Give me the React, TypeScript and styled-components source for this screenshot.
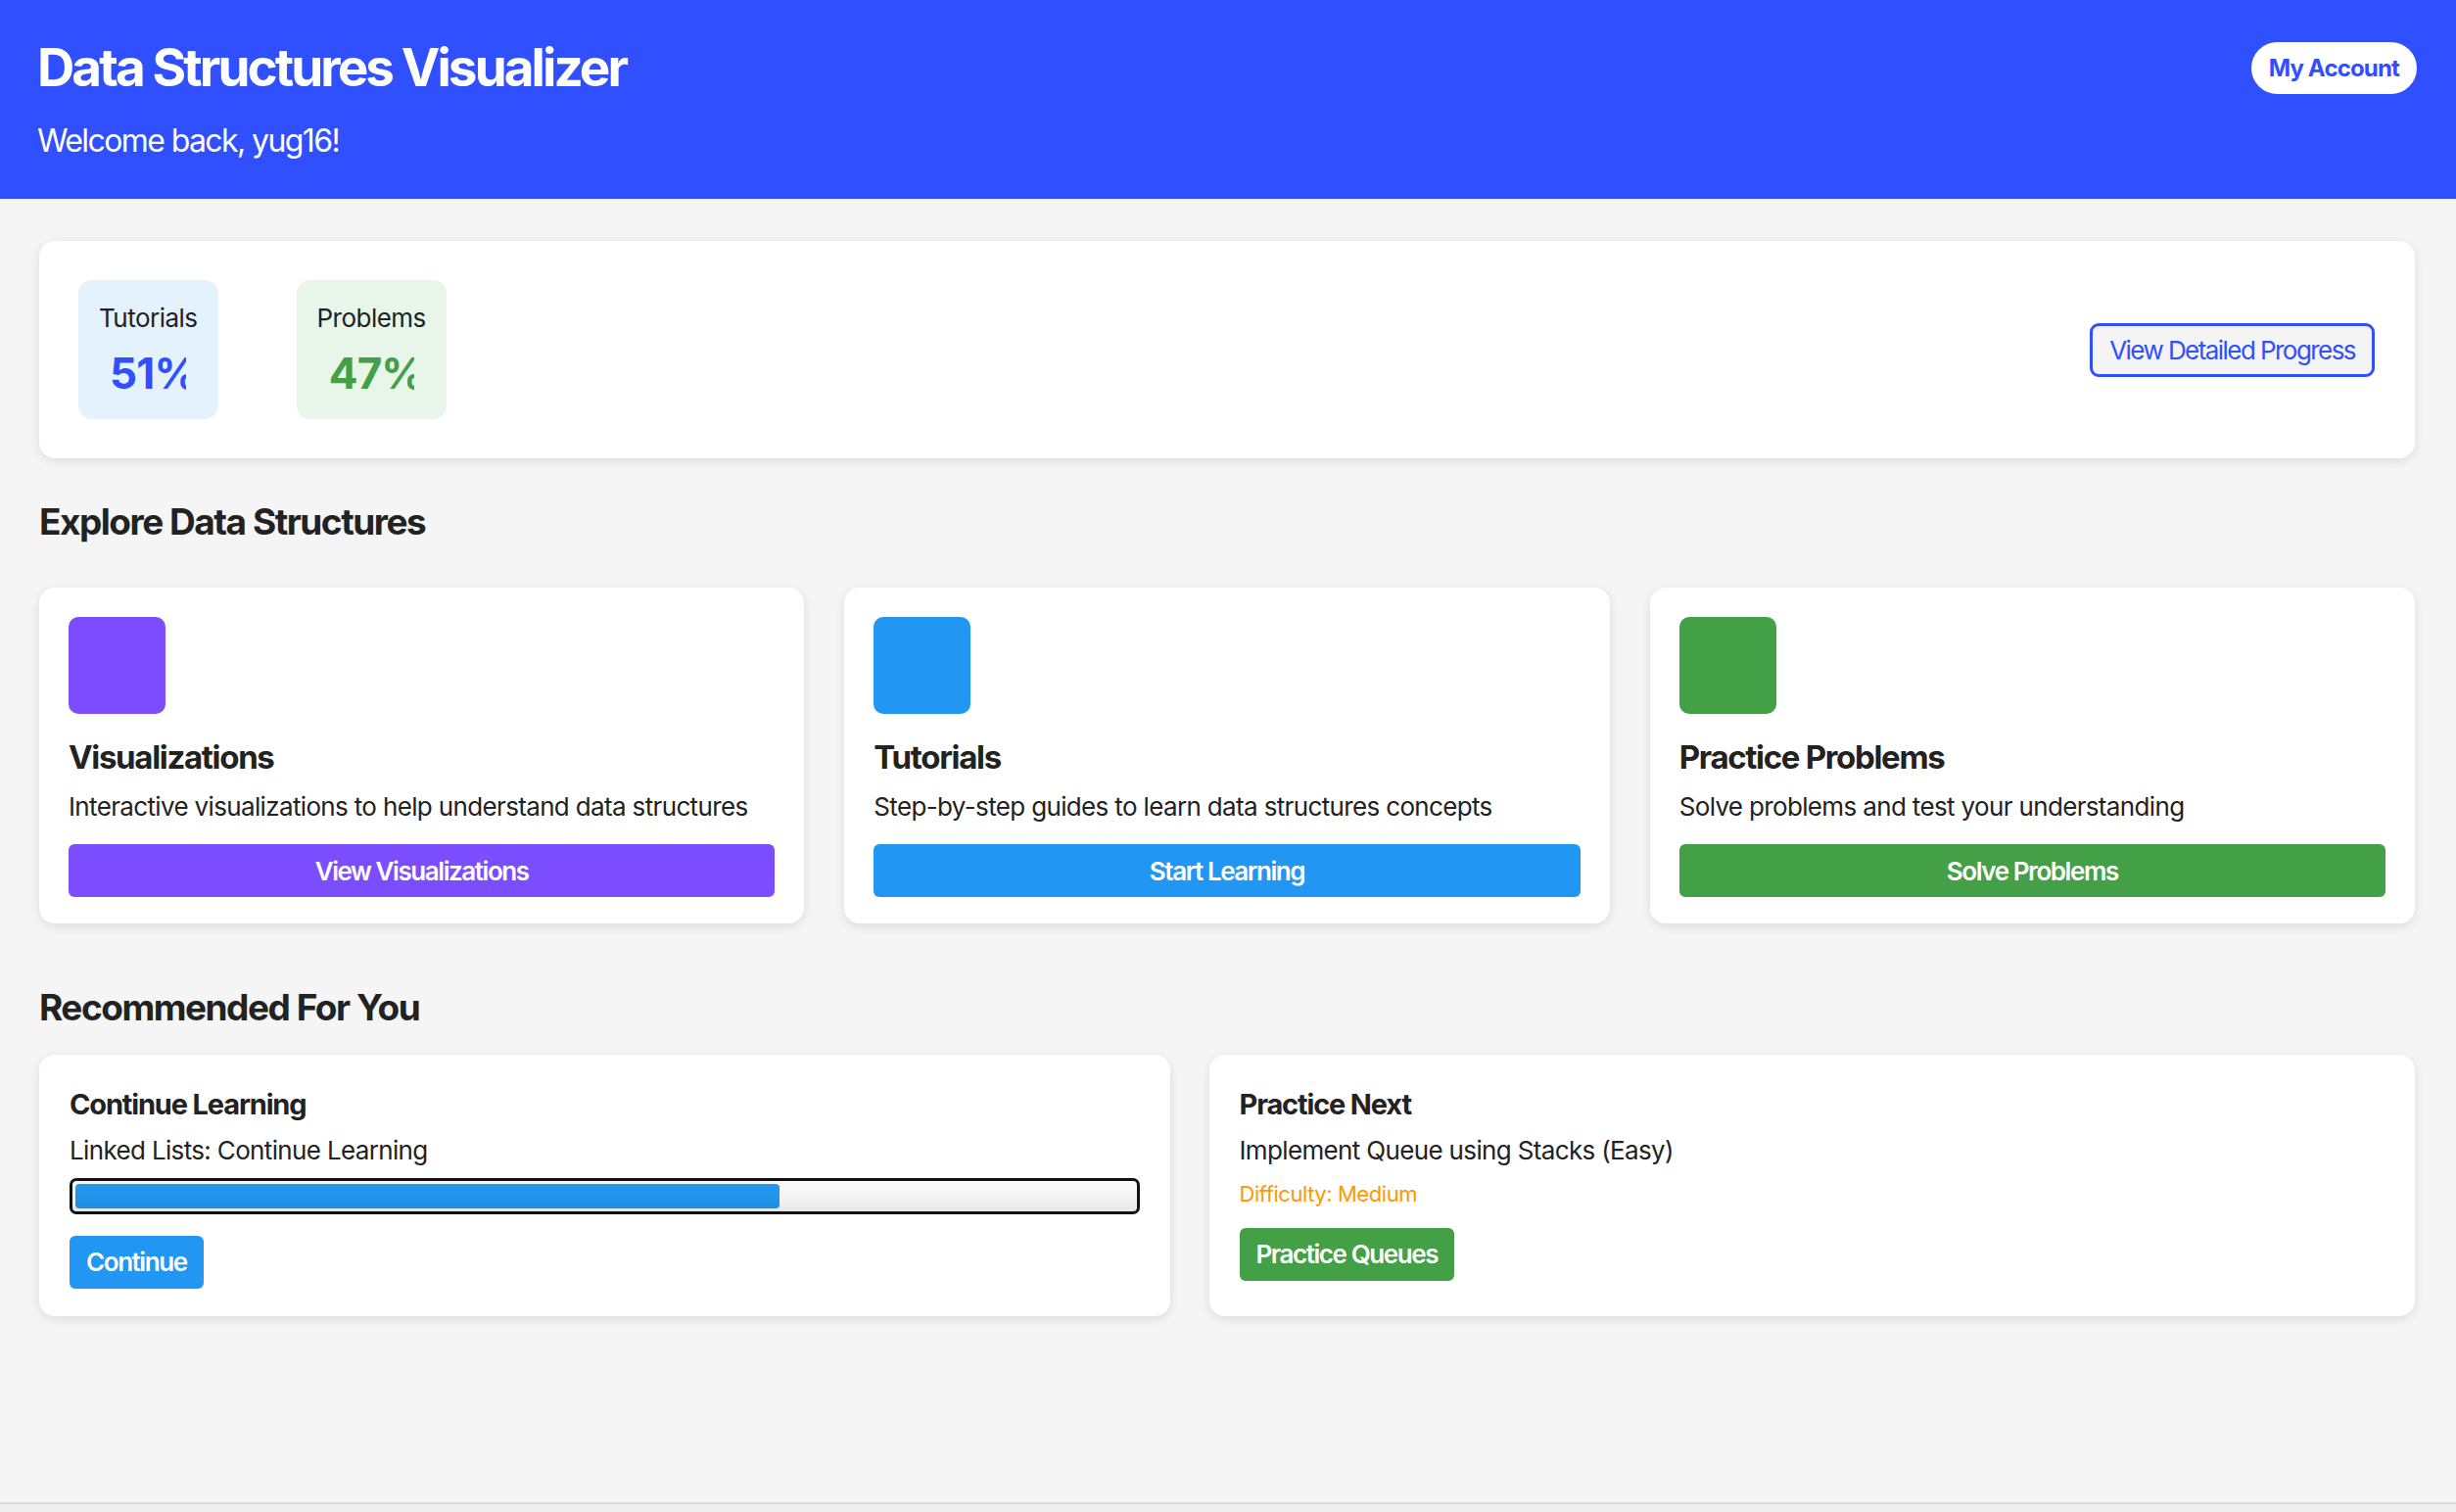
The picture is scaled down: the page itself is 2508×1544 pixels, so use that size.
import React from 'react';
import styled, { createGlobalStyle } from 'styled-components';

const GlobalStyle = createGlobalStyle`
  * { box-sizing: border-box; }
  body {
    margin: 0;
    background: #eeeeee;
    font-family: Inter, "Noto Sans", "Liberation Sans", sans-serif;
    color: #222;
  }
`;

const stats = [
  { label: 'Tutorials', value: 51, tone: 'blue' as const },
  { label: 'Problems', value: 47, tone: 'green' as const },
];

const features = [
  {
    title: 'Visualizations',
    text: 'Interactive visualizations to help understand data structures',
    action: 'View Visualizations',
    color: '#7c4dff',
  },
  {
    title: 'Tutorials',
    text: 'Step-by-step guides to learn data structures concepts',
    action: 'Start Learning',
    color: '#2196f3',
  },
  {
    title: 'Practice Problems',
    text: 'Solve problems and test your understanding',
    action: 'Solve Problems',
    color: '#43a047',
  },
];

const App = () => {
  return (
    <>
      <GlobalStyle />
      <Page>
        <Header>
          <div>
            <AppTitle>Data Structures Visualizer</AppTitle>
            <Welcome>Welcome back, yug16!</Welcome>
          </div>
          <AccountButton>My Account</AccountButton>
        </Header>

        <Main>
          <StatsCard>
            <StatGroup>
              {stats.map((s) => (
                <StatBox key={s.label} $tone={s.tone}>
                  <StatLabel>{s.label}</StatLabel>
                  <StatValue $tone={s.tone}>{s.value}%</StatValue>
                </StatBox>
              ))}
            </StatGroup>
            <OutlineButton>View Detailed Progress</OutlineButton>
          </StatsCard>

          <SectionTitle>Explore Data Structures</SectionTitle>
          <FeatureGrid>
            {features.map((f) => (
              <FeatureCard key={f.title}>
                <FeatureIcon $color={f.color} />
                <FeatureTitle>{f.title}</FeatureTitle>
                <FeatureText>{f.text}</FeatureText>
                <WideButton $color={f.color}>{f.action}</WideButton>
              </FeatureCard>
            ))}
          </FeatureGrid>

          <SectionTitle>Recommended For You</SectionTitle>
          <RecGrid>
            <RecCard>
              <RecTitle>Continue Learning</RecTitle>
              <RecText>Linked Lists: Continue Learning</RecText>
              <ProgressTrack>
                <ProgressFill style={{ width: '66.5%' }} />
              </ProgressTrack>
              <SmallButton $color="#2196f3">Continue</SmallButton>
            </RecCard>
            <RecCard>
              <RecTitle>Practice Next</RecTitle>
              <RecText>Implement Queue using Stacks (Easy)</RecText>
              <Difficulty>Difficulty: Medium</Difficulty>
              <SmallButton $color="#43a047">Practice Queues</SmallButton>
            </RecCard>
          </RecGrid>
        </Main>
      </Page>
      <Footer />
    </>
  );
};

export default App;

const Page = styled.div`
  min-height: 1534px;
  background: #f5f5f5;
`;

const Header = styled.header`
  display: flex;
  justify-content: space-between;
  align-items: flex-start;
  height: 203px;
  padding: 38px 40px 0 38px;
  background: #304ffe;
  color: #fff;
`;

const AppTitle = styled.h1`
  margin: 0;
  font-size: 53px;
  line-height: 1.2;
  font-weight: 700;
  letter-spacing: -0.055em;
`;

const Welcome = styled.p`
  margin: 23px 0 0;
  font-size: 32px;
  line-height: 1.2;
  font-weight: 400;
  letter-spacing: -0.05em;
`;

const AccountButton = styled.button`
  margin-top: 5px;
  height: 53px;
  padding: 0 18px;
  border: none;
  border-radius: 27px;
  background: #fff;
  color: #304ffe;
  font-family: inherit;
  font-size: 24px;
  font-weight: 700;
  letter-spacing: -0.035em;
`;

const Main = styled.main`
  padding: 43px 42px 0 40px;
`;

const StatsCard = styled.section`
  display: flex;
  justify-content: space-between;
  align-items: center;
  height: 222px;
  padding: 0 41px 0 40px;
  border-radius: 16px;
  background: #fff;
  box-shadow: 0 3px 12px rgba(0, 0, 0, 0.1);
`;

const StatGroup = styled.div`
  display: flex;
  gap: 80px;
`;

const StatBox = styled.div<{ $tone: 'blue' | 'green' }>`
  height: 142px;
  padding: 23px 21px 0;
  border-radius: 14px;
  background: ${({ $tone }) => ($tone === 'blue' ? '#e3f2fd' : '#e8f5e9')};
  text-align: center;
`;

const StatLabel = styled.div`
  font-size: 26px;
  line-height: 1.2;
  color: #222;
  letter-spacing: -0.02em;
`;

const StatValue = styled.div<{ $tone: 'blue' | 'green' }>`
  width: 78%;
  margin: 15px auto 0;
  overflow: hidden;
  white-space: nowrap;
  text-align: left;
  font-size: 44px;
  line-height: 1.2;
  font-weight: 700;
  letter-spacing: -0.02em;
  color: ${({ $tone }) => ($tone === 'blue' ? '#304ffe' : '#43a047')};
`;

const OutlineButton = styled.button`
  height: 55px;
  padding: 0 17px;
  border: 3px solid #304ffe;
  border-radius: 9px;
  background: #f4f4f4;
  color: #304ffe;
  font-family: inherit;
  font-size: 26px;
  letter-spacing: -0.06em;
`;

const SectionTitle = styled.h2`
  margin: 43px 0 0;
  font-size: 37px;
  line-height: 1.2;
  font-weight: 700;
  letter-spacing: -0.04em;
  color: #222;
`;

const FeatureGrid = styled.div`
  display: grid;
  grid-template-columns: repeat(3, 1fr);
  gap: 41px;
  margin: 45px 0 64px;
`;

const FeatureCard = styled.article`
  display: flex;
  flex-direction: column;
  padding: 30px 30px 27px;
  border-radius: 16px;
  background: #fff;
  box-shadow: 0 3px 12px rgba(0, 0, 0, 0.1);
`;

const FeatureIcon = styled.div<{ $color: string }>`
  width: 99px;
  height: 99px;
  border-radius: 10px;
  background: ${({ $color }) => $color};
`;

const FeatureTitle = styled.h3`
  margin: 25px 0 0;
  font-size: 33px;
  line-height: 1.2;
  font-weight: 700;
  letter-spacing: -0.04em;
  color: #222;
`;

const FeatureText = styled.p`
  margin: 14px 0 0;
  font-size: 26px;
  line-height: 1.2;
  letter-spacing: -0.025em;
  color: #222;
`;

const WideButton = styled.button<{ $color: string }>`
  margin-top: 23px;
  height: 54px;
  border: none;
  border-radius: 6px;
  background: ${({ $color }) => $color};
  color: #fff;
  font-family: inherit;
  font-size: 26px;
  font-weight: 600;
  letter-spacing: -0.055em;
`;

const RecGrid = styled.div`
  display: grid;
  grid-template-columns: 15fr 16fr;
  gap: 40px;
  margin-top: 25px;
`;

const RecCard = styled.article`
  display: flex;
  flex-direction: column;
  align-items: flex-start;
  padding: 34px 31px 28px;
  border-radius: 16px;
  background: #fff;
  box-shadow: 0 3px 12px rgba(0, 0, 0, 0.1);
`;

const RecTitle = styled.h3`
  margin: 0;
  font-size: 29px;
  line-height: 1.2;
  font-weight: 700;
  letter-spacing: -0.04em;
  color: #222;
`;

const RecText = styled.p`
  margin: 14px 0 0;
  font-size: 26px;
  line-height: 1.2;
  letter-spacing: -0.025em;
  color: #222;
`;

const Difficulty = styled.p`
  margin: 15px 0 0;
  font-size: 22px;
  line-height: 1.2;
  letter-spacing: -0.02em;
  color: #ff9800;
`;

const ProgressTrack = styled.div`
  width: 100%;
  height: 37px;
  margin-top: 12px;
  padding: 3px;
  border: 3px solid #111;
  border-radius: 7px;
  background: linear-gradient(#fafafa, #f2f2f2 60%, #e6e6e6);
`;

const ProgressFill = styled.div`
  height: 100%;
  border-radius: 4px;
  background: linear-gradient(#2399ef, #1f8fe6);
`;

const SmallButton = styled.button<{ $color: string }>`
  margin-top: 22px;
  height: 54px;
  padding: 0 17px;
  border: none;
  border-radius: 6px;
  background: ${({ $color }) => $color};
  color: #fff;
  font-family: inherit;
  font-size: 26px;
  font-weight: 600;
  letter-spacing: -0.055em;
`;

const Footer = styled.footer`
  height: 10px;
  border-top: 2px solid #dcdcdc;
  background: #eeeeee;
`;
